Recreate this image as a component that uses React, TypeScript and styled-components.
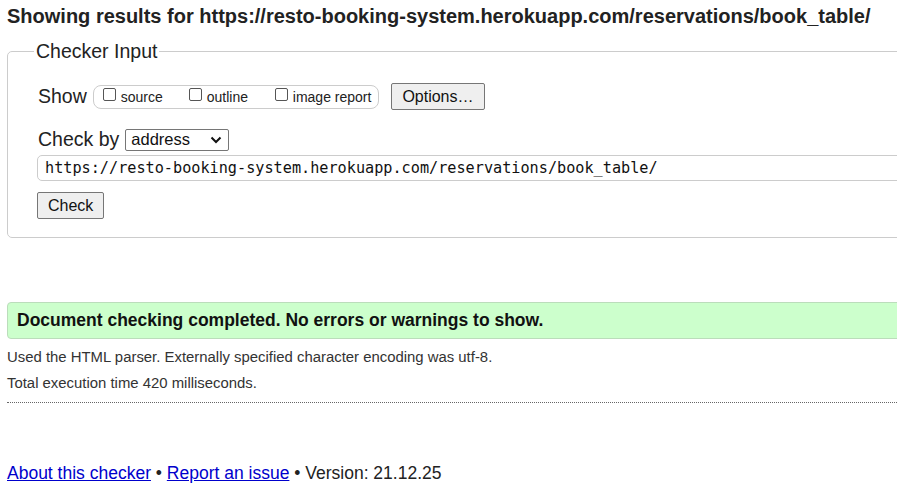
import styled, { createGlobalStyle } from "styled-components";

const GlobalStyle = createGlobalStyle`
    html, body {
        margin: 0;
        padding: 0;
        background: #fff;
        overflow: hidden;
    }
    body {
        font-family: "Liberation Sans", Arial, sans-serif;
        color: #222;
    }
`;

const Page = styled.div`
    width: 1000px;
    padding: 6px 0 0 7px;
`;

const Title = styled.h2`
    margin: 0;
    font-size: 20px;
    font-weight: bold;
    line-height: 20px;
    color: #222;
    white-space: nowrap;
`;

const InputBox = styled.fieldset`
    margin: 14px 0 0 0;
    padding: 20px 0 18px 30px;
    border: 1px solid #ccc;
    border-radius: 5px;
    min-width: 0;
`;

const Legend = styled.legend`
    margin-left: -4px;
    padding: 0 2px;
    font-size: 19.5px;
    color: #222;
`;

const Line = styled.div<{ $gap?: number }>`
    display: flex;
    align-items: center;
    margin-bottom: ${({ $gap }) => $gap ?? 0}px;
`;

const BigLabel = styled.span`
    font-size: 19.5px;
    color: #222;
    margin-right: 6px;
`;

const Options = styled.div`
    display: flex;
    align-items: center;
    height: 22px;
    border: 1px solid #ccc;
    border-radius: 8px;
    padding: 0 7px 0 9px;
    margin-right: 12px;
`;

const Choice = styled.label<{ $width?: number }>`
    display: flex;
    align-items: center;
    font-size: 14px;
    color: #222;
    width: ${({ $width }) => ($width ? `${$width}px` : "auto")};
`;

const Box = styled.span`
    width: 13px;
    height: 13px;
    box-sizing: border-box;
    border: 1px solid #555;
    border-radius: 2px;
    margin: -4px 5px 0 0;
`;

const Button = styled.button<{ $shift?: number }>`
    font-family: "Liberation Sans", Arial, sans-serif;
    font-size: 16px;
    color: #111;
    background: #efefef;
    border: 1px solid #767676;
    border-radius: 2px;
    padding: 0 10px;
    height: 27px;
    margin-left: ${({ $shift }) => $shift ?? 0}px;
`;

const Select = styled.div`
    display: flex;
    align-items: center;
    justify-content: space-between;
    width: 104px;
    height: 22px;
    box-sizing: border-box;
    border: 1px solid #767676;
    border-radius: 2px;
    padding: 0 6px 0 5px;
    font-size: 16.5px;
    color: #111;
`;

const UrlField = styled.div`
    height: 26px;
    box-sizing: border-box;
    border: 1px solid #ccc;
    border-radius: 5px;
    padding: 0 0 0 7px;
    display: flex;
    align-items: center;
    font-family: "DejaVu Sans Mono", "Liberation Mono", monospace;
    font-size: 15.2px;
    color: #111;
    margin: 4px 0 11px -1px;
`;

const Success = styled.div`
    margin-top: 64px;
    height: 37px;
    box-sizing: border-box;
    background: #ccffcc;
    border: 1px solid #bbddbb;
    border-radius: 4px;
    padding-left: 9px;
    display: flex;
    align-items: center;
    font-size: 17.5px;
    font-weight: bold;
    color: #111;
`;

const Note = styled.p<{ $top: number }>`
    margin: ${({ $top }) => $top}px 0 0 0;
    font-size: 14.9px;
    line-height: 17px;
    color: #333;
`;

const Divider = styled.hr`
    margin: 10px 0 0 0;
    border: 0;
    border-top: 1px dotted #666;
`;

const Footer = styled.p`
    margin: 60px 0 0 0;
    font-size: 17.5px;
    color: #222;
`;

const Link = styled.a`
    color: #0000cc;
    text-decoration: underline;
`;

export default function App() {
    const url = "https://resto-booking-system.herokuapp.com/reservations/book_table/";

    return (
        <>
            <GlobalStyle />
            <Page>
                <Title>Showing results for {url}</Title>
                <InputBox>
                    <Legend>Checker Input</Legend>
                    <Line $gap={18}>
                        <BigLabel>Show</BigLabel>
                        <Options>
                            <Choice $width={86}><Box />source</Choice>
                            <Choice $width={86}><Box />outline</Choice>
                            <Choice><Box />image report</Choice>
                        </Options>
                        <Button>Options…</Button>
                    </Line>
                    <Line>
                        <BigLabel>Check by</BigLabel>
                        <Select>
                            address
                            <svg width="12" height="8" viewBox="0 0 12 8">
                                <path d="M1.5 1.5 L6 6 L10.5 1.5" fill="none" stroke="#111" strokeWidth="2" />
                            </svg>
                        </Select>
                    </Line>
                    <UrlField>{url}</UrlField>
                    <Button $shift={-1}>Check</Button>
                </InputBox>
                <Success>Document checking completed. No errors or warnings to show.</Success>
                <Note $top={10}>Used the HTML parser. Externally specified character encoding was utf-8.</Note>
                <Note $top={9}>Total execution time 420 milliseconds.</Note>
                <Divider />
                <Footer>
                    <Link href="#">About this checker</Link> • <Link href="#">Report an issue</Link> • Version: 21.12.25
                </Footer>
            </Page>
        </>
    );
}
